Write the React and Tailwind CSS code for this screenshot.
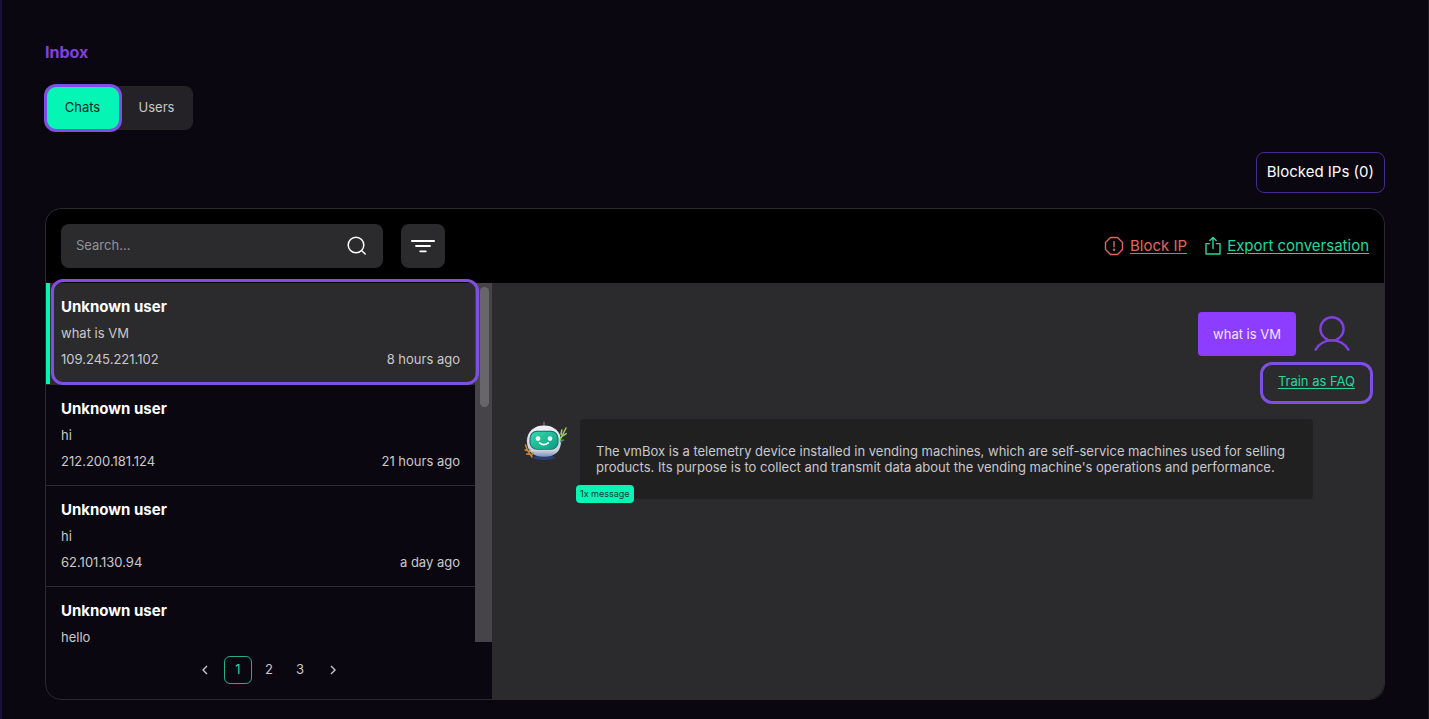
import React, { useState } from 'react';

const CONVERSATIONS = [
  { id: 1, name: 'Unknown user', message: 'what is VM', ip: '109.245.221.102', time: '8 hours ago' },
  { id: 2, name: 'Unknown user', message: 'hi', ip: '212.200.181.124', time: '21 hours ago' },
  { id: 3, name: 'Unknown user', message: 'hi', ip: '62.101.130.94', time: 'a day ago' },
  { id: 4, name: 'Unknown user', message: 'hello' },
];

const PAGES = [1, 2, 3];

function SearchIcon() {
  return (
    <svg className="h-5 w-5" viewBox="0 0 20 20" fill="none" stroke="currentColor" strokeWidth="1.5" strokeLinecap="round">
      <circle cx="9" cy="9" r="7.8" />
      <path d="M14.8 14.8L18.2 18" />
    </svg>
  );
}

function FilterIcon() {
  return (
    <svg className="h-6 w-6" viewBox="0 0 24 24" fill="none" stroke="currentColor" strokeWidth="1.8" strokeLinecap="round">
      <path d="M.9 7h22.200M5 12h14M9.200 17.300h5.600" />
    </svg>
  );
}

function BlockIcon() {
  return (
    <svg className="h-5 w-5" viewBox="0 0 20 20" fill="none" stroke="currentColor" strokeWidth="1.4" strokeLinecap="round" strokeLinejoin="round">
      <path d="M6.500 1.500h7l5 5v7l-5 5h-7l-5-5v-7z" />
      <path d="M10 5.600v5.200" />
      <circle cx="10" cy="13.800" r=".5" fill="currentColor" />
    </svg>
  );
}

function ExportIcon() {
  return (
    <svg className="h-5 w-4" viewBox="0 0 16 20" fill="none" stroke="currentColor" strokeWidth="1.4" strokeLinecap="round" strokeLinejoin="round">
      <path d="M4.600 7.600H1v10.400h14V7.600h-3.600" />
      <path d="M8 12.600V1.600M4.800 4.600L8 1.400l3.200 3.200" />
    </svg>
  );
}

function UserIcon() {
  return (
    <svg className="h-9 w-9" viewBox="0 0 36 36" fill="none" stroke="currentColor" strokeWidth="2.4" strokeLinecap="round">
      <circle cx="18" cy="12.800" r="11.600" />
      <path d="M1.600 33.600C5.200 27.600 11.300 24.400 18 24.400s12.800 3.200 16.400 9.200" />
    </svg>
  );
}

function RobotAvatar() {
  return (
    <svg className="h-10 w-11 shrink-0" viewBox="0 0 44 40">
      <defs>
        <linearGradient id="shell" x1="0" y1="0" x2="0" y2="1">
          <stop offset="0" stopColor="#f1f1f8" />
          <stop offset="0.8" stopColor="#ccd0e0" />
          <stop offset="1" stopColor="#7f8db2" />
        </linearGradient>
        <linearGradient id="face" x1="0" y1="0" x2="1" y2="1">
          <stop offset="0" stopColor="#35d9ac" />
          <stop offset="1" stopColor="#0c9c83" />
        </linearGradient>
      </defs>
      <path d="M20 5V1.200" stroke="#646a78" strokeWidth="1.400" strokeLinecap="round" />
      <ellipse cx="20" cy="36.600" rx="11" ry="2.400" fill="#243f74" />
      <path d="M3.500 15q-3 5 .5 11zM36.500 15q3 5-.5 11z" fill="#2e4468" />
      <path d="M3 20C3 10.500 10 4.500 20 4.500S37 10.500 37 20c0 9.500-5 15.800-17 15.800S3 29.500 3 20z" fill="url(#shell)" />
      <rect x="5.500" y="9.800" width="29" height="19" rx="7.500" fill="#116d66" />
      <rect x="6.500" y="10.700" width="27" height="17.200" rx="6.800" fill="url(#face)" />
      <circle cx="14" cy="17.600" r="2.300" fill="#fff" />
      <circle cx="26" cy="17.600" r="2.300" fill="#fff" />
      <path d="M15.600 21.800q4.200 3.600 8.600 0" fill="none" stroke="#fff" strokeWidth="1.700" strokeLinecap="round" />
      <g fill="none" strokeLinecap="round">
        <path d="M36 19L42 7M37 13.500l.8-4.500M38.800 15l3.400-2.400" stroke="#9fcf55" strokeWidth="1.500" />
        <path d="M36.500 20.500l3-1.500" stroke="#3f8f62" strokeWidth="1.400" />
        <path d="M1.500 24l2 5.500 4.500 6.500M1 29l2.500.5M2.500 33l3 .2M5.800 28.500l-.8 3M9 31.500l-1.400 3" stroke="#d08a34" strokeWidth="1.400" />
      </g>
    </svg>
  );
}

function Chevron({ flip }) {
  return (
    <svg className={flip ? 'h-3 w-3 rotate-180' : 'h-3 w-3'} viewBox="0 0 12 12" fill="none" stroke="currentColor" strokeWidth="1.4">
      <path d="M8 2L4 6l4 4" />
    </svg>
  );
}

function ConversationRow({ item, active, onSelect }) {
  return (
    <li className="border-b border-[#2c2a32]">
      <button
        type="button"
        onClick={onSelect}
        className={
          active
            ? 'flex h-[101px] w-full flex-col border-l-4 border-[#05f5b5] bg-[#2b2b2d] pt-3 pr-[15px] pl-[11px] text-left'
            : 'flex h-[100px] w-full flex-col pt-3 pr-[15px] pl-[15px] text-left'
        }
      >
        <span className="text-[15px] leading-6 font-bold text-white">{item.name}</span>
        <span className="mt-1.5 text-[13px] leading-4">{item.message}</span>
        {item.ip && (
          <span className="mt-1 flex w-full justify-between text-[13px] leading-7">
            <span>{item.ip}</span>
            <span>{item.time}</span>
          </span>
        )}
      </button>
    </li>
  );
}

export default function App() {
  const [tab, setTab] = useState('chats');
  const [selected, setSelected] = useState(1);
  const [page, setPage] = useState(1);
  const [search, setSearch] = useState('');

  return (
    <main className="min-h-screen border-r border-l-2 border-r-[#1a1721] border-l-[#17123a] bg-[#0b0711] px-[43px] pt-10 pb-[19px] font-['Inter',sans-serif] text-[13px] text-[#c9c8cc]">
      <h1 className="text-base leading-6 font-bold text-[#8040e0]">Inbox</h1>

      <div className="mt-[22px] flex">
        <div className="flex h-11 rounded-lg bg-[#252227]">
          <div className="relative flex">
            <button type="button" onClick={() => setTab('chats')} className="w-[75px] rounded-lg bg-[#05f5b5] text-[#0d2b26]">
              Chats
            </button>
            <span className="pointer-events-none absolute -inset-y-0.5 -right-0.5 -left-px rounded-xl border-3 border-[#7f4fe4]" />
          </div>
          <button type="button" onClick={() => setTab('users')} className="w-[73px]">
            Users
          </button>
        </div>
      </div>

      <div className="mt-[22px] flex justify-end">
        <button type="button" className="h-[41px] rounded-lg border border-[#45288a] px-[10px] text-[15px] text-white">
          Blocked IPs (0)
        </button>
      </div>

      <section className="mt-[15px] rounded-2xl border border-[#2a292d]">
        <header className="flex items-center justify-between rounded-t-2xl bg-black px-[15px] pt-[15px] pb-[15px]">
          <div className="flex gap-[18px]">
            <label className="flex h-11 w-[322px] items-center rounded-lg bg-[#2b2b2d] pr-4 pl-[15px]">
              <input
                type="text"
                aria-label="Search"
                placeholder="Search..."
                value={search}
                onChange={(e) => setSearch(e.target.value)}
                className="min-w-0 flex-1 bg-transparent outline-none placeholder:text-[#929196]"
              />
              <span className="text-white">
                <SearchIcon />
              </span>
            </label>
            <button type="button" aria-label="Filter" className="flex h-11 w-11 items-center justify-center rounded-lg bg-[#2b2b2d] text-white">
              <FilterIcon />
            </button>
          </div>
          <div className="flex items-center gap-[18px] text-[15px]">
            <a href="#block" className="flex items-center gap-1.5 text-[#e0695f]">
              <BlockIcon />
              <span className="underline underline-offset-2">Block IP</span>
            </a>
            <a href="#export" className="flex items-center gap-1.5 text-[#25d79c]">
              <ExportIcon />
              <span className="underline underline-offset-2">Export conversation</span>
            </a>
          </div>
        </header>

        <div className="flex">
          {/* Conversation list */}
          <div className="relative w-[446px] shrink-0">
            <div className="flex h-[359px]">
              <ul className="flex-1 overflow-hidden">
                {CONVERSATIONS.map((item) => (
                  <ConversationRow
                    key={item.id}
                    item={item}
                    active={item.id === selected}
                    onSelect={() => setSelected(item.id)}
                  />
                ))}
              </ul>
              <div className="w-[17px] bg-[#474449] pt-1 pl-[5px]">
                <div className="h-30 w-[9px] rounded-full bg-[#68656b]" />
              </div>
            </div>
            <span className="pointer-events-none absolute -top-1 left-[5px] h-[106px] w-[428px] rounded-xl border-3 border-[#7f4fe4]" />

            <nav aria-label="Pagination" className="flex items-center justify-center gap-[3px] pt-[14px] pb-[15px]">
              <button type="button" aria-label="Previous page" className="flex h-7 w-8 items-center justify-center">
                <Chevron />
              </button>
              {PAGES.map((n) => (
                <button
                  key={n}
                  type="button"
                  onClick={() => setPage(n)}
                  className={n === page ? 'h-7 w-7 rounded-md border border-[#23ad85] text-[#25d7a0]' : 'h-7 w-7'}
                >
                  {n}
                </button>
              ))}
              <button type="button" aria-label="Next page" className="flex h-7 w-8 items-center justify-center">
                <Chevron flip />
              </button>
            </nav>
          </div>

          {/* Open conversation */}
          <div className="min-w-0 flex-1 rounded-br-2xl bg-[#2b2b2d] pt-[29px]">
            <div className="flex items-center justify-end gap-[18px] pr-[34px]">
              <p className="rounded-sm bg-[#8c3dff] px-[15px] py-3 leading-5 text-[#efe6ff]">what is VM</p>
              <span className="text-[#7f40e0]">
                <UserIcon />
              </span>
            </div>
            <div className="mt-[15px] flex justify-end pr-[29px]">
              <div className="relative flex">
                <a href="#train" className="leading-5 text-[#25d79c] underline underline-offset-2">
                  Train as FAQ
                </a>
                <span className="pointer-events-none absolute -inset-x-[18px] -top-[9px] h-[42px] rounded-xl border-3 border-[#7f4fe4]" />
              </div>
            </div>

            <div className="mt-7 flex gap-3 pr-[71px] pl-8">
              <div className="pt-0.5">
                <RobotAvatar />
              </div>
              <div className="relative min-w-0 flex-1 rounded-sm bg-[#202021] px-4 py-6 leading-4">
                <p>
                  The vmBox is a telemetry device installed in vending machines, which are self-service machines used for
                  selling products. Its purpose is to collect and transmit data about the vending machine's operations and
                  performance.
                </p>
                <span className="absolute -bottom-1 -left-1 rounded-sm bg-[#05f5b5] px-1 text-[9px] leading-[18px] text-[#0d3a30]">
                  1x message
                </span>
              </div>
            </div>
          </div>
        </div>
      </section>
    </main>
  );
}
